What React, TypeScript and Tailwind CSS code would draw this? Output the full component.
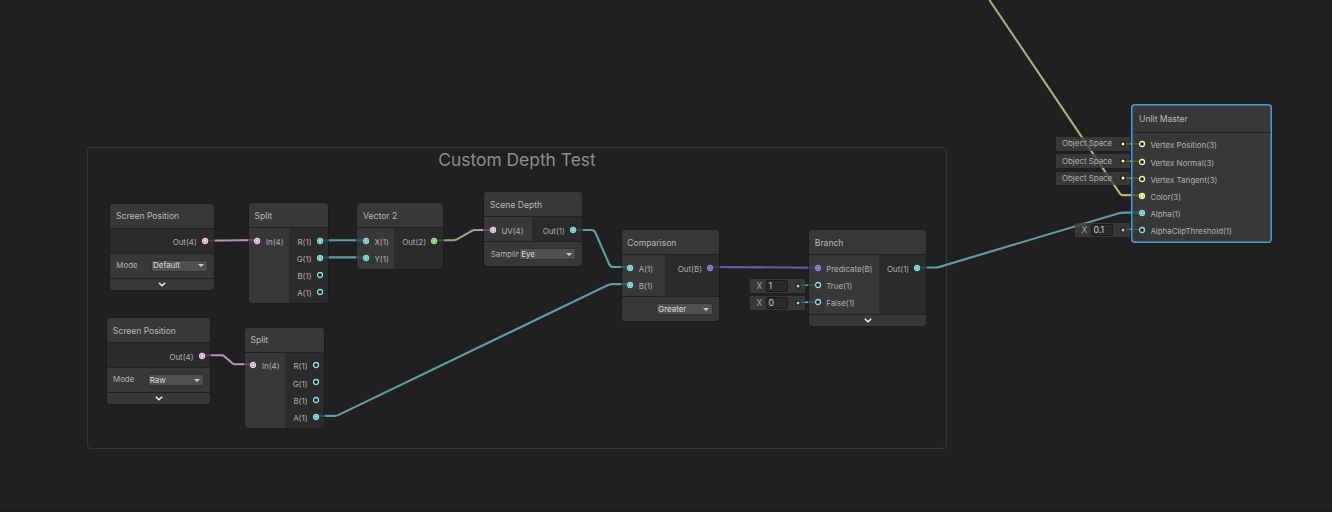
import type { ReactNode } from "react";
import clsx from "clsx";

type Tone = "pink" | "cyan" | "green" | "violet" | "yellow";

const tones: Record<Tone, string> = {
  pink: "#fbcbf4",
  cyan: "#84e4e7",
  green: "#9cef8f",
  violet: "#9481e6",
  yellow: "#fbff9a",
};

function Socket({ tone, linked }: { tone: Tone; linked?: boolean }) {
  const c = tones[tone];
  return (
    <svg className="size-2 shrink-0 overflow-visible" viewBox="0 0 8 8" fill="none">
      <circle cx="4" cy="4" r="2.5" fill={linked ? c : "#1d1d1d"} fillOpacity={linked ? 0.72 : 1} stroke={c} strokeWidth="1.3" />
      {linked && <circle cx="4" cy="4" r="1.8" stroke="#333" strokeOpacity="0.4" strokeWidth="0.5" />}
      {linked && <circle cx="4" cy="4" r="1.4" fill={c} />}
    </svg>
  );
}

interface PortProps {
  label: string;
  tone: Tone;
  linked?: boolean;
}

function InPort({ label, tone, linked }: PortProps) {
  return (
    <div className="flex h-[17.2px] items-center gap-[4.7px] pl-[4.5px]">
      <Socket tone={tone} linked={linked} />
      <span className="pt-[4px]">{label}</span>
    </div>
  );
}

function OutPort({ label, tone, linked }: PortProps) {
  return (
    <div className="flex h-[17.2px] items-center justify-end gap-[4.2px] pr-[4.6px]">
      <span className="pt-[4px]">{label}</span>
      <Socket tone={tone} linked={linked} />
    </div>
  );
}

function Inputs({ className, children }: { className?: string; children: ReactNode }) {
  return <div className={clsx("shrink-0 bg-[#3f3f3f]/80", className)}>{children}</div>;
}

function Outputs({ className, children }: { className?: string; children: ReactNode }) {
  return <div className={clsx("flex-1 bg-[#2e2e2e]/80", className)}>{children}</div>;
}

function GraphNode({ title, className, children }: { title: string; className: string; children: ReactNode }) {
  return (
    <section className={clsx("absolute flex flex-col overflow-hidden rounded-[3px] shadow-[0_0_0_0.6px_#191919]", className)}>
      <header className="flex h-[25px] shrink-0 items-center border-b border-[#222] bg-[#3f3f3f]/80 pt-[2px] pl-[5.8px] text-[8.55px] text-[#b8b8b8]">
        {title}
      </header>
      {children}
    </section>
  );
}

function Dropdown({ value, className }: { value: string; className?: string }) {
  return (
    <div className={clsx("flex h-3 items-center justify-between rounded-[2px] border border-[#303030] bg-[#505050] pr-[3px] pl-px text-[#dcdcdc]", className)}>
      <span className="pt-px">{value}</span>
      <svg className="h-[3px] w-[6px]" viewBox="0 0 6 3">
        <path d="M0 0h6L3 3z" fill="#ccc" />
      </svg>
    </div>
  );
}

function Expander() {
  return (
    <footer className="flex flex-1 items-center justify-center border-t border-[#222] bg-[#3f3f3f]/80">
      <svg className="h-[5px] w-[8px]" viewBox="0 0 8 5" fill="none">
        <path d="M.8 .8L4 3.8L7.2 .8" stroke="#f0f0f0" strokeWidth="1.4" />
      </svg>
    </footer>
  );
}

function ScreenPosition({ mode, className }: { mode: string; className: string }) {
  return (
    <GraphNode title="Screen Position" className={clsx("h-[86px] w-[103.300px]", className)}>
      <div className="flex h-[25px] border-b border-[#222]">
        <Outputs className="pt-[4px]">
          <OutPort label="Out(4)" tone="pink" linked />
        </Outputs>
      </div>
      <div className="flex h-[24px] items-center justify-between bg-[#3f3f3f]/80 pr-[6px] pl-[6px]">
        <span>Mode</span>
        <Dropdown value={mode} className="w-[56.500px]" />
      </div>
      <Expander />
    </GraphNode>
  );
}

function Split({ linked, className }: { linked: string; className: string }) {
  return (
    <GraphNode title="Split" className={clsx("h-[100px] w-[79.700px]", className)}>
      <div className="flex flex-1">
        <Inputs className="w-[40px] pt-[4px]">
          <InPort label="In(4)" tone="pink" linked />
        </Inputs>
        <Outputs className="pt-[4px]">
          {["R", "G", "B", "A"].map((c) => (
            <OutPort key={c} label={`${c}(1)`} tone="cyan" linked={linked.includes(c)} />
          ))}
        </Outputs>
      </div>
    </GraphNode>
  );
}

function PinDot({ tone }: { tone: Tone }) {
  return (
    <svg className="size-2 shrink-0" viewBox="0 0 8 8">
      <circle cx="4" cy="4" r="2.8" fill="#1c1c1c" />
      <circle cx="4" cy="4" r="1.5" fill={tones[tone]} />
    </svg>
  );
}

function SpaceTag() {
  return (
    <div className="flex h-[13.500px] w-[74px] items-center justify-between bg-[#3f3f3f]/80 pr-[3.300px] pl-[6px]">
      <span className="pt-px">Object Space</span>
      <PinDot tone="yellow" />
    </div>
  );
}

function ValueTag({ value }: { value: string }) {
  return (
    <div className="flex h-[13.500px] w-[55px] items-center bg-[#3f3f3f]/80 pr-[3.300px] pl-[6.500px]">
      <span className="w-[9.500px] text-[8.500px] text-[#a4a4a4]">X</span>
      <span className="flex h-[12px] w-[21.500px] items-center rounded-[2px] border border-[#1b1b1b] bg-[#2a2a2a] pt-px pl-[1.500px] text-[8.800px] text-[#c8c8c8]">{value}</span>
      <span className="ml-auto flex">
        <PinDot tone="cyan" />
      </span>
    </div>
  );
}

function Wires() {
  return (
    <svg className="absolute inset-0 h-full w-full" viewBox="0 0 1332 512" fill="none" strokeWidth="2.1" strokeLinejoin="round">
      <defs>
        <linearGradient id="uv" gradientUnits="userSpaceOnUse" x1="434" y1="0" x2="493" y2="0">
          <stop stopColor="#76b06c" />
          <stop offset="1" stopColor="#bd9ab8" />
        </linearGradient>
        <linearGradient id="color" gradientUnits="userSpaceOnUse" x1="0" y1="0" x2="0" y2="196">
          <stop stopColor="#aca581" />
          <stop offset="1" stopColor="#b4b570" />
        </linearGradient>
      </defs>
      <g stroke="#b795b3">
        <path d="M205 241.2L257 240.5" />
        <path d="M202 356H221Q222.500 356 223.500 357L231.500 364Q232.700 365 234 365H253" />
      </g>
      <g stroke="#5d9fa1">
        <path d="M320 240.700H366M320 257.900H366" />
        <path d="M573 230.500H591Q594 230.500 595.200 233L609 264.500Q610.300 267.500 613 267.500H630" />
        <path d="M316 416.700H334Q336 416.700 338 415.700L607 286Q610 284.700 613 284.700H630" />
        <path d="M917.500 268H936Q938 268 940 267.400L1119 213.900Q1122 213 1124 213H1141" />
      </g>
      <path d="M434.500 240.700H453Q455 240.700 456.500 239.800L471 231.500Q473 230.500 475 230.500H492.500" stroke="url(#uv)" />
      <path d="M710.500 267.500L817.500 268.200" stroke="#6a5ca8" />
      <path d="M990 0L1120.500 193.500Q1121.800 195.500 1123.500 195.500H1141" stroke="url(#color)" />
      <g strokeWidth="1.4">
        <path d="M798 285.700H817M798 302.800H817M1123 229.800H1141" stroke="#6cbcbe" />
        <path d="M1123 144.200H1141M1123 161.500H1141M1123 178.600H1141" stroke="#b5b76f" />
      </g>
    </svg>
  );
}

export default function App() {
  return (
    <main className="relative h-[512px] w-[1332px] overflow-hidden border-b border-[#1b191b] bg-[#202020] font-['Inter',sans-serif] text-[7.900px] leading-none whitespace-nowrap text-[#b0b0b0]">
      <div className="absolute top-[147px] left-[87px] flex h-[302px] w-[860px] justify-center rounded-[4px] border border-[#353535]">
        <h1 className="mt-[2px] text-[17.400px] leading-[20px] text-[#8e8e8e]">Custom Depth Test</h1>
      </div>

      <Wires />

      <ScreenPosition mode="Default" className="top-[203.500px] left-[110.300px]" />
      <ScreenPosition mode="Raw" className="top-[318.400px] left-[107px]" />
      <Split linked="RG" className="top-[203px] left-[248.700px]" />
      <Split linked="A" className="top-[327.700px] left-[244.700px]" />

      <GraphNode title="Vector 2" className="top-[203px] left-[357.300px] h-[66px] w-[85.500px]">
        <div className="flex flex-1">
          <Inputs className="w-[37px] pt-[4px]">
            <InPort label="X(1)" tone="cyan" linked />
            <InPort label="Y(1)" tone="cyan" linked />
          </Inputs>
          <Outputs className="pt-[4px]">
            <OutPort label="Out(2)" tone="green" linked />
          </Outputs>
        </div>
      </GraphNode>

      <GraphNode title="Scene Depth" className="top-[192.200px] left-[484.200px] h-[74px] w-[97.500px]">
        <div className="flex h-[25px] border-b border-[#222]">
          <Inputs className="w-[48px] pt-[4px]">
            <InPort label="UV(4)" tone="pink" linked />
          </Inputs>
          <Outputs className="pt-[4px]">
            <OutPort label="Out(1)" tone="cyan" linked />
          </Outputs>
        </div>
        <div className="flex flex-1 items-center bg-[#3f3f3f]/80 pr-[6px] pl-[6.500px]">
          <span className="w-[28.500px] overflow-hidden pt-[2px] pb-px">Sampling</span>
          <Dropdown value="Eye" className="flex-1" />
        </div>
      </GraphNode>

      <GraphNode title="Comparison" className="top-[230px] left-[621.500px] h-[91px] w-[97.300px]">
        <div className="flex h-[42px] border-b border-[#222]">
          <Inputs className="w-[43.500px] pt-[4px]">
            <InPort label="A(1)" tone="cyan" linked />
            <InPort label="B(1)" tone="cyan" linked />
          </Inputs>
          <Outputs className="pt-[4px]">
            <OutPort label="Out(B)" tone="violet" linked />
          </Outputs>
        </div>
        <div className="flex flex-1 items-center justify-end bg-[#3f3f3f]/80 pr-[6px]">
          <Dropdown value="Greater" className="w-[56.500px]" />
        </div>
      </GraphNode>

      <div className="absolute top-[279px] left-[750px] flex flex-col gap-[3.500px]">
        <ValueTag value="1" />
        <ValueTag value="0" />
      </div>

      <GraphNode title="Branch" className="top-[230.300px] left-[809px] h-[96px] w-[117px]">
        <div className="flex h-[59px]">
          <Inputs className="w-[70px] pt-[4px]">
            <InPort label="Predicate(B)" tone="violet" linked />
            <InPort label="True(1)" tone="cyan" />
            <InPort label="False(1)" tone="cyan" />
          </Inputs>
          <Outputs className="pt-[4px]">
            <OutPort label="Out(1)" tone="cyan" linked />
          </Outputs>
        </div>
        <Expander />
      </GraphNode>

      <div className="absolute top-[137.200px] left-[1056px] flex flex-col items-end gap-[3.700px]">
        <SpaceTag />
        <SpaceTag />
        <SpaceTag />
      </div>
      <div className="absolute top-[223px] left-[1075px]">
        <ValueTag value="0.1" />
      </div>

      <section className="absolute top-[104px] left-[1131.300px] flex h-[139px] w-[141px] flex-col overflow-hidden rounded-[4px] bg-[#3f3f3f]/80 shadow-[inset_0_0_0_1.500px_#3f9fd8]">
        <header className="mx-[1.500px] flex h-[29px] shrink-0 items-center border-b border-[#222] pt-[3px] pl-[6.300px] text-[8.550px] text-[#b8b8b8]">
          Unlit Master
        </header>
        <div className="flex-1 pt-[2.800px] pl-[1.900px]">
          <InPort label="Vertex Position(3)" tone="yellow" />
          <InPort label="Vertex Normal(3)" tone="yellow" />
          <InPort label="Vertex Tangent(3)" tone="yellow" />
          <InPort label="Color(3)" tone="yellow" linked />
          <InPort label="Alpha(1)" tone="cyan" linked />
          <InPort label="AlphaClipThreshold(1)" tone="cyan" />
        </div>
      </section>
    </main>
  );
}
